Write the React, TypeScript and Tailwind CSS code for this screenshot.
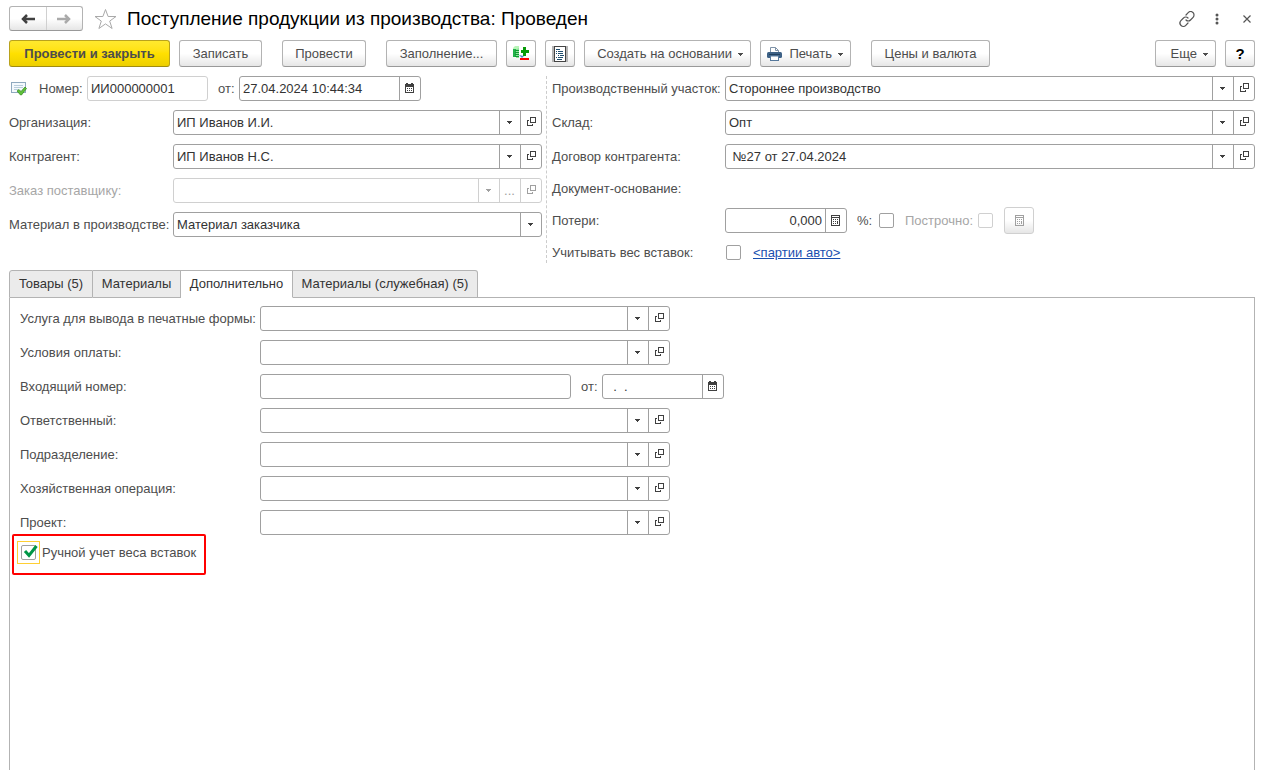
import { useState, type ReactNode } from "react";
import clsx from "clsx";

const fieldBox = "flex h-[25px] min-w-0 overflow-hidden rounded-[3px] border bg-white";
const fieldInput = "h-full w-full min-w-0 flex-1 bg-transparent px-[3px] text-[#333] outline-none";

function Caret() {
  return (
    <svg width="5" height="3" viewBox="0 0 5 3" className="shrink-0" shapeRendering="crispEdges" fill="currentColor">
      <path d="M0 0h5v1H0zM1 1h3v1H1zM2 2h1v1H2z" />
    </svg>
  );
}

function OpenIcon() {
  return (
    <svg width="9" height="9" viewBox="0 0 9 9" className="mb-[2px] ml-[2px]" shapeRendering="crispEdges" fill="currentColor">
      <path d="M3 0h6v6H3zM4 1v4h4V1z" fillRule="evenodd" />
      <path d="M0 3h2v1H1v4h4V7h1v2H0z" />
    </svg>
  );
}

function CalendarIcon() {
  return (
    <svg width="9" height="10" viewBox="0 0 9 10" className="mb-px" shapeRendering="crispEdges" fill="currentColor">
      <path d="M0 1h1V0h2v1h3V0h2v1h1v9H0zM1 4v5h7V4z" fillRule="evenodd" />
      <path d="M2 5h1v1H2zM4 5h1v1H4zM6 5h1v1H6zM2 7h1v1H2zM4 7h1v1H4zM6 7h1v1H6z" />
    </svg>
  );
}

function CalcIcon() {
  return (
    <svg width="9" height="11" viewBox="0 0 9 11" shapeRendering="crispEdges" fill="currentColor">
      <path d="M0 0h9v11H0zM1 1v1h7V1zM1 3v7h7V3z" fillRule="evenodd" />
      <path d="M2 4h1v1H2zM4 4h1v1H4zM6 4h1v1H6zM2 6h1v1H2zM4 6h1v1H4zM6 6h1v3H6zM2 8h1v1H2zM4 8h1v1H4z" />
    </svg>
  );
}

function PrinterIcon() {
  return (
    <svg width="15" height="14" viewBox="0 0 15 14">
      <path d="M3.5 6V.5h5l3 3V6" fill="#fff" stroke="#7f93a8" />
      <path d="M8.5.5v3h3" fill="none" stroke="#7f93a8" />
      <rect x="0" y="5" width="15" height="6" rx="1.5" fill="#3d6186" />
      <rect x="2" y="7" width="11" height="1" fill="#20405f" />
      <rect x="3.5" y="9" width="8" height="4.5" fill="#fff" stroke="#56789b" />
    </svg>
  );
}

function BarsPlusMinusIcon() {
  return (
    <svg width="17" height="15" viewBox="0 0 17 15">
      <rect x="0" y="3" width="3" height="8" fill="#22b24a" />
      <rect x="3" y="1" width="3" height="11" fill="#8fe39b" />
      <path d="M0 2l2-2h4v2l-2 1H0z" fill="#b8f5b8" />
      <path d="M2 4.500h4M2 6.500h4M2 8.500h4M2 10.500h4" stroke="#0f9a30" />
      <path d="M6 9l3 3 2-2z" fill="#4a86c8" />
      <path d="M10 1h3v3h3v3h-3v3h-3V7H8V4h2z" fill="#089a08" />
      <rect x="7" y="12" width="9" height="2" fill="#f00" />
    </svg>
  );
}

function ReportIcon() {
  return (
    <svg width="16" height="16" viewBox="0 0 16 16" shapeRendering="crispEdges">
      <rect width="16" height="16" fill="#b5b5b5" />
      <rect x="2.5" y=".5" width="11" height="15" fill="#fff" stroke="#444" />
      <path d="M4 3.500h4M6 5.500h5M6 7.500h5M8 9.500h4M6 11.500h5M5 13.500h5" stroke="#1f4e6e" />
      <path d="M4 5.500h1M4 7.500h1M6 9.500h1M4 11.500h1" stroke="#1f4e6e" />
    </svg>
  );
}

function PostedIcon() {
  return (
    <svg width="16" height="14" viewBox="0 0 16 14">
      <rect x=".5" y=".5" width="14" height="10" fill="#f4f9fd" stroke="#8fa9bf" />
      <path d="M3 3.500h9M3 5.500h9M3 7.500h4" stroke="#b9cddc" />
      <path d="M6 9l2-1.500 2 2L14 5l1.500 1.500-5 6.500H9.500z" fill="#5fc03a" stroke="#2f8717" strokeWidth=".7" />
    </svg>
  );
}

interface FieldProps {
  id: string;
  label: string;
  value?: string;
  disabled?: boolean;
  dots?: boolean;
}

function FieldButton({ label, disabled, children }: { label: string; disabled?: boolean; children: ReactNode }) {
  return (
    <button
      type="button"
      aria-label={label}
      disabled={disabled}
      className={clsx(
        "flex h-full w-[21px] shrink-0 items-center justify-center border-l pr-px",
        disabled ? "border-[#d0d0d0] text-[#a0a0a0]" : "border-[#a0a0a0] text-[#404040]",
      )}
    >
      {children}
    </button>
  );
}

function ComboBox({ id, label, value = "", disabled, dots }: FieldProps) {
  return (
    <div className={clsx(fieldBox, "flex-1", disabled ? "border-[#d0d0d0]" : "border-[#a0a0a0]")}>
      <input id={id} type="text" defaultValue={value} disabled={disabled} className={fieldInput} />
      <FieldButton label={`${label} выбрать`} disabled={disabled}><Caret /></FieldButton>
      {dots && <FieldButton label={`${label} показать все`} disabled={disabled}>...</FieldButton>}
      <FieldButton label={`${label} открыть`} disabled={disabled}><OpenIcon /></FieldButton>
    </div>
  );
}

function ComboRow({ labelWidth, ...field }: FieldProps & { labelWidth: string }) {
  return (
    <div className="flex items-center">
      <label htmlFor={field.id} className={clsx("shrink-0 whitespace-nowrap", labelWidth, field.disabled && "text-[#a6a6a6]")}>
        {field.label}
      </label>
      <ComboBox {...field} />
    </div>
  );
}

function CheckBox({ id, disabled }: { id: string; disabled?: boolean }) {
  return (
    <input
      id={id}
      type="checkbox"
      disabled={disabled}
      className={clsx(
        "size-[15px] shrink-0 appearance-none rounded-[2px] border bg-white checked:bg-[#009646]",
        disabled ? "border-[#d0d0d0]" : "border-[#a0a0a0]",
      )}
    />
  );
}

interface ToolButtonProps {
  children: ReactNode;
  label?: string;
  primary?: boolean;
  menu?: boolean;
  disabled?: boolean;
  className?: string;
}

function ToolButton({ children, label, primary, menu, disabled, className }: ToolButtonProps) {
  return (
    <button
      type="button"
      aria-label={label}
      disabled={disabled}
      className={clsx(
        "flex h-[27px] shrink-0 items-center whitespace-nowrap rounded-[3px] border bg-linear-to-b",
        primary
          ? "border-[#b9a21c] border-b-[#a08c10] from-[#ffe92e] via-[#ffe000] to-[#edcf00] font-bold"
          : "from-white via-white to-[#e6e6e6]",
        !primary && (disabled ? "border-[#d0d0d0] text-[#a0a0a0]" : "border-[#b3b3b3] border-b-[#999]"),
        menu ? "justify-end pr-[7px]" : "justify-center",
        className,
      )}
    >
      {children}
      {menu && <span className="ml-[6px] pt-[2px]"><Caret /></span>}
    </button>
  );
}

const tabs = [
  { title: "Товары (5)", width: "w-[84px]" },
  { title: "Материалы", width: "w-[88px]" },
  { title: "Дополнительно", width: "w-[112px]" },
  { title: "Материалы (служебная) (5)", width: "w-[185px]" },
];

const extraTop = [
  { id: "service", label: "Услуга для вывода в печатные формы:" },
  { id: "terms", label: "Условия оплаты:" },
];

const extraBottom = [
  { id: "responsible", label: "Ответственный:" },
  { id: "division", label: "Подразделение:" },
  { id: "operation", label: "Хозяйственная операция:" },
  { id: "project", label: "Проект:" },
];

function TitleBar() {
  return (
    <header className="flex h-[25px] items-center">
      <div className="flex h-[25px] w-[74px] overflow-hidden rounded-[3px] border border-[#b3b3b3] border-b-[#999] bg-linear-to-b from-white via-white to-[#e6e6e6]">
        <button type="button" aria-label="Назад" className="flex flex-1 items-center justify-center text-[#404040]">
          <svg width="14" height="10" viewBox="0 0 14 10" fill="none" stroke="currentColor" strokeWidth="2.500">
            <path d="M2 5H14M6 1L2 5l4 4" />
          </svg>
        </button>
        <button type="button" aria-label="Вперед" disabled className="flex flex-1 items-center justify-center border-l border-[#d0d0d0] text-[#aaa]">
          <svg width="14" height="10" viewBox="0 0 14 10" fill="none" stroke="currentColor" strokeWidth="2.500">
            <path d="M12 5H0M8 1l4 4-4 4" />
          </svg>
        </button>
      </div>
      <button type="button" aria-label="В избранное" className="ml-[11px]">
        <svg width="23" height="22" viewBox="0 0 23 22" fill="#fff" stroke="#a9a9a9">
          <path d="M11.500 1.500l2.600 7h7.900l-6.300 4.600 2.400 7.400-6.600-4.600-6.600 4.600 2.400-7.400L1 8.500h7.900z" />
        </svg>
      </button>
      <h1 className="ml-[10px] flex-1 text-[19px] leading-[24px] text-black">Поступление продукции из производства: Проведен</h1>
      <div className="flex items-center text-[#555]">
        <button type="button" aria-label="Получить ссылку">
          <svg width="16" height="16" viewBox="0 0 16 16" fill="none" stroke="currentColor" strokeWidth="1.200" strokeLinecap="round">
            <path d="M7 4l2.200-2.300a3.100 3.100 0 0 1 4.900 4.600L11.500 9a3 3 0 0 1-4.500 0" />
            <path d="M9 12l-2.200 2.300a3.100 3.100 0 0 1-4.900-4.600L4.500 7A3 3 0 0 1 9 7" />
          </svg>
        </button>
        <button type="button" aria-label="Еще действия" className="ml-[20px]">
          <svg width="4" height="12" viewBox="0 0 4 12" fill="currentColor">
            <circle cx="2" cy="2" r="1.500" />
            <circle cx="2" cy="6" r="1.500" />
            <circle cx="2" cy="10" r="1.500" />
          </svg>
        </button>
        <button type="button" aria-label="Закрыть" className="mr-[4px] ml-[24px]">
          <svg width="8" height="8" viewBox="0 0 8 8" stroke="currentColor" strokeWidth="1.200">
            <path d="M.5.5l7 7M7.500.5l-7 7" />
          </svg>
        </button>
      </div>
    </header>
  );
}

function Toolbar() {
  return (
    <div className="mt-[9px] flex">
      <ToolButton primary className="w-[161px]">Провести и закрыть</ToolButton>
      <ToolButton className="ml-[9px] w-[83px]">Записать</ToolButton>
      <ToolButton className="ml-[20px] w-[84px]">Провести</ToolButton>
      <ToolButton className="ml-[20px] w-[111px]">Заполнение...</ToolButton>
      <ToolButton label="Изменить количество" className="ml-[9px] w-[30px]"><BarsPlusMinusIcon /></ToolButton>
      <ToolButton label="Движения документа" className="ml-[9px] w-[30px]"><ReportIcon /></ToolButton>
      <ToolButton menu className="ml-[9px] w-[167px]">Создать на основании</ToolButton>
      <ToolButton menu className="ml-[9px] w-[91px]">
        <PrinterIcon />
        <span className="ml-[7px]">Печать</span>
      </ToolButton>
      <ToolButton className="ml-[20px] w-[119px]">Цены и валюта</ToolButton>
      <ToolButton menu className="ml-auto w-[61px]">Еще</ToolButton>
      <ToolButton label="Справка" className="ml-[9px] w-[30px]">
        <span className="text-[15px] font-bold text-black">?</span>
      </ToolButton>
    </div>
  );
}

function DocumentHead() {
  return (
    <div className="mt-[9px] flex">
      <div className="flex w-[533px] shrink-0 flex-col gap-[9px]">
        <div className="flex items-center">
          <span className="ml-[2px]"><PostedIcon /></span>
          <label htmlFor="number" className="ml-[12px] w-[48px]">Номер:</label>
          <div className={clsx(fieldBox, "w-[121px] border-[#d0d0d0]")}>
            <input id="number" type="text" defaultValue="ИИ000000001" className={fieldInput} />
          </div>
          <label htmlFor="date" className="ml-[10px] w-[21px]">от:</label>
          <div className={clsx(fieldBox, "w-[182px] border-[#a0a0a0]")}>
            <input id="date" type="text" defaultValue="27.04.2024 10:44:34" className={fieldInput} />
            <FieldButton label="Выбрать дату"><CalendarIcon /></FieldButton>
          </div>
        </div>
        <ComboRow id="org" label="Организация:" value="ИП Иванов И.И." labelWidth="w-[164px]" />
        <ComboRow id="partner" label="Контрагент:" value="ИП Иванов Н.С." labelWidth="w-[164px]" />
        <ComboRow id="order" label="Заказ поставщику:" labelWidth="w-[164px]" disabled dots />
        <div className="flex items-center">
          <label htmlFor="material" className="w-[164px] shrink-0 whitespace-nowrap">Материал в производстве:</label>
          <div className={clsx(fieldBox, "flex-1 border-[#a0a0a0]")}>
            <select id="material" className={clsx(fieldInput, "appearance-none")}>
              <option>Материал заказчика</option>
            </select>
            <span className="pointer-events-none flex w-[21px] items-center justify-center border-l border-[#a0a0a0] pr-px text-[#404040]">
              <Caret />
            </span>
          </div>
        </div>
      </div>

      <div className="ml-[4px] flex min-w-0 flex-1 flex-col gap-[9px] border-l border-dashed border-[#ccc] pl-[5px]">
        <ComboRow id="area" label="Производственный участок:" value="Стороннее производство" labelWidth="w-[173px]" />
        <ComboRow id="store" label="Склад:" value="Опт" labelWidth="w-[173px]" />
        <ComboRow id="contract" label="Договор контрагента:" value=" №27 от 27.04.2024" labelWidth="w-[173px]" />
        <div className="flex h-[21px] items-center">Документ-основание:</div>
        <div className="flex h-[25px] items-center">
          <label htmlFor="loss" className="w-[173px] shrink-0">Потери:</label>
          <div className={clsx(fieldBox, "w-[122px] border-[#a0a0a0]")}>
            <input id="loss" type="text" defaultValue="0,000" className={clsx(fieldInput, "text-right")} />
            <FieldButton label="Калькулятор"><CalcIcon /></FieldButton>
          </div>
          <label htmlFor="percent" className="ml-[10px] w-[22px]">%:</label>
          <CheckBox id="percent" />
          <label htmlFor="byrow" className="ml-[11px] w-[73px] text-[#a6a6a6]">Построчно:</label>
          <CheckBox id="byrow" disabled />
          <ToolButton disabled label="Рассчитать потери" className="ml-[11px] w-[30px]"><CalcIcon /></ToolButton>
        </div>
        <div className="flex h-[21px] items-center">
          <label htmlFor="weight" className="w-[174px] shrink-0">Учитывать вес вставок:</label>
          <CheckBox id="weight" />
          <a href="#" className="ml-[12px] text-[#1a4fb0] underline">&lt;партии авто&gt;</a>
        </div>
      </div>
    </div>
  );
}

function ExtraPanel() {
  const [manual, setManual] = useState(true);

  return (
    <div className="flex flex-1 flex-col items-start gap-[9px] border-x border-[#b3b3b3] px-[10px] pt-[8px]">
      {extraTop.map((f) => (
        <div key={f.id} className="w-[650px]">
          <ComboRow {...f} labelWidth="w-[240px]" />
        </div>
      ))}
      <div className="flex items-center">
        <label htmlFor="incoming" className="w-[240px] shrink-0">Входящий номер:</label>
        <div className={clsx(fieldBox, "w-[311px] border-[#a0a0a0]")}>
          <input id="incoming" type="text" className={fieldInput} />
        </div>
        <label htmlFor="incoming-date" className="ml-[10px] w-[21px]">от:</label>
        <div className={clsx(fieldBox, "w-[122px] border-[#a0a0a0]")}>
          <input id="incoming-date" type="text" defaultValue="  .  ." className={clsx(fieldInput, "whitespace-pre")} />
          <FieldButton label="Выбрать дату"><CalendarIcon /></FieldButton>
        </div>
      </div>
      {extraBottom.map((f) => (
        <div key={f.id} className="w-[650px]">
          <ComboRow {...f} labelWidth="w-[240px]" />
        </div>
      ))}
      <div className="relative -mt-[3px] -ml-[3px] flex items-center">
        <span className="grid size-[23px] place-items-center border border-[#ffcf33]">
          <input
            id="manual"
            type="checkbox"
            checked={manual}
            onChange={(e) => setManual(e.target.checked)}
            className="col-start-1 row-start-1 size-[15px] appearance-none rounded-[2px] border border-[#a0a0a0] bg-white"
          />
          {manual && (
            <svg width="15" height="13" viewBox="0 0 15 13" className="pointer-events-none col-start-1 row-start-1 mb-[3px] ml-[3px]">
              <path d="M2 6l4 4.500L13.500 1" fill="none" stroke="#009646" strokeWidth="3" />
            </svg>
          )}
        </span>
        <label htmlFor="manual" className="ml-[2px]">Ручной учет веса вставок</label>
        <span className="pointer-events-none absolute -top-[7px] -right-[10px] -bottom-[11px] -left-[5px] rounded-[2px] border-2 border-[#ff0000]" />
      </div>
    </div>
  );
}

export default function App() {
  const [active, setActive] = useState(2);

  return (
    <main className="flex min-h-screen flex-col bg-white pt-[6px] pr-[6px] pb-[3px] pl-[9px] font-['Liberation_Sans',Arial,sans-serif] text-[13px] leading-[16px] text-[#4d4d4d]">
      <TitleBar />
      <Toolbar />
      <DocumentHead />
      <div role="tablist" className="mt-[7px] flex h-[28px]">
        {tabs.map((t, i) => (
          <button
            key={t.title}
            type="button"
            role="tab"
            aria-selected={i === active}
            onClick={() => setActive(i)}
            className={clsx(
              "shrink-0 whitespace-nowrap border-t border-r border-b border-[#b3b3b3] text-[#333] first:rounded-tl-[3px] first:border-l last-of-type:rounded-tr-[3px]",
              t.width,
              i === active ? "border-b-white bg-white" : "bg-[#ebebeb]",
            )}
          >
            {t.title}
          </button>
        ))}
        <span className="flex-1 border-b border-[#b3b3b3]" />
      </div>
      <ExtraPanel />
    </main>
  );
}
